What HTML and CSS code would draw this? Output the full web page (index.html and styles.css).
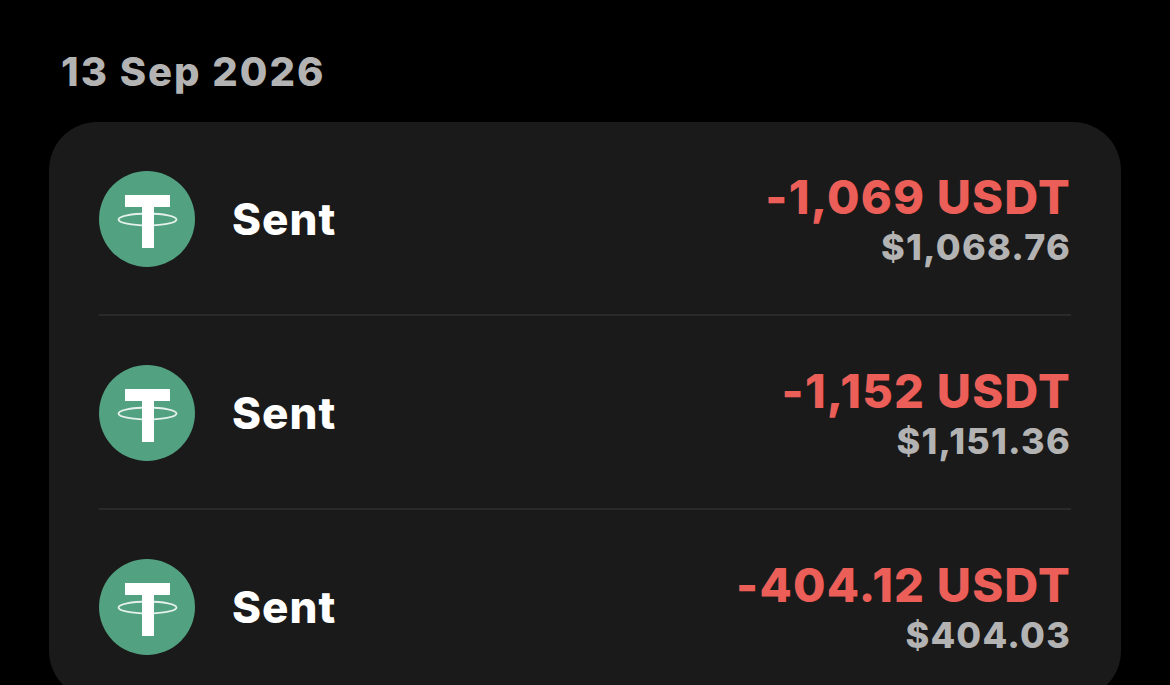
FILE: index.html
```html
<!DOCTYPE html>
<html>
	<head>
		<meta name="viewport" content="width=device-width, initial-scale=1.0">
		<title>Transactions</title>
		<link rel="stylesheet" href="styles.css">
	</head>
	<body>
		<svg class="icon_defs" width="0" height="0">
			<symbol id="tether" viewBox="0 0 96 96">
				<circle cx="48" cy="48" r="48" fill="#52a180"/>
				<path d="M26 24h45v12H55v41H43V36H26z" fill="#fff"/>
				<ellipse cx="48.500" cy="48.500" rx="29" ry="6" fill="none" stroke="#fff" stroke-width="1.800" stroke-opacity="0.850"/>
			</symbol>
		</svg>
		<h2 class="date_title">13 Sep 2026</h2>
		<div class="tx_card">
			<div class="tx_row">
				<svg class="tx_icon"><use href="#tether"/></svg>
				<span class="tx_label">Sent</span>
				<div class="tx_amounts">
					<div class="tx_amount">-1,069 USDT</div>
					<div class="tx_fiat">$1,068.76</div>
				</div>
			</div>
			<div class="tx_row">
				<svg class="tx_icon"><use href="#tether"/></svg>
				<span class="tx_label">Sent</span>
				<div class="tx_amounts">
					<div class="tx_amount">-1,152 USDT</div>
					<div class="tx_fiat">$1,151.36</div>
				</div>
			</div>
			<div class="tx_row">
				<svg class="tx_icon"><use href="#tether"/></svg>
				<span class="tx_label">Sent</span>
				<div class="tx_amounts">
					<div class="tx_amount">-404.12 USDT</div>
					<div class="tx_fiat">$404.03</div>
				</div>
			</div>
		</div>
	</body>
</html>
```

FILE: styles.css
```css
html, body
{
	height: 100%;
	overflow: hidden;
}
body
{
	margin: 0;
	background: #000;
	font-family: Inter, 'Liberation Sans', sans-serif;
}
.icon_defs
{
	display: block;
	height: 0;
}
.date_title
{
	margin: 0;
	padding: 48px 0 0 61px;
	height: 122px;
	box-sizing: border-box;
	font-size: 40px;
	line-height: 48px;
	font-weight: 800;
	letter-spacing: 2px;
	color: #b3b3b3;
}
.tx_card
{
	margin: 0 49px;
	padding: 0 50px;
	height: 577px;
	background: #1a1a1a;
	border-radius: 48px;
}
.tx_row
{
	display: flex;
	align-items: center;
	box-sizing: border-box;
	height: 194px;
	padding-top: 2px;
	border-bottom: 2px solid #2a2a2a;
}
.tx_row:last-child
{
	border-bottom-color: transparent;
}
.tx_icon
{
	width: 96px;
	height: 96px;
	flex-shrink: 0;
}
.tx_label
{
	margin-left: 37px;
	font-size: 44px;
	font-weight: 800;
	letter-spacing: 1px;
	color: #fff;
}
.tx_amounts
{
	margin-left: auto;
	padding-top: 2px;
	text-align: right;
}
.tx_amount
{
	font-size: 47px;
	line-height: 54px;
	font-weight: 800;
	letter-spacing: 1.200px;
	color: #ec5e58;
}
.tx_fiat
{
	font-size: 36px;
	line-height: 46px;
	font-weight: 800;
	letter-spacing: 1.200px;
	color: #b3b3b3;
}
```
